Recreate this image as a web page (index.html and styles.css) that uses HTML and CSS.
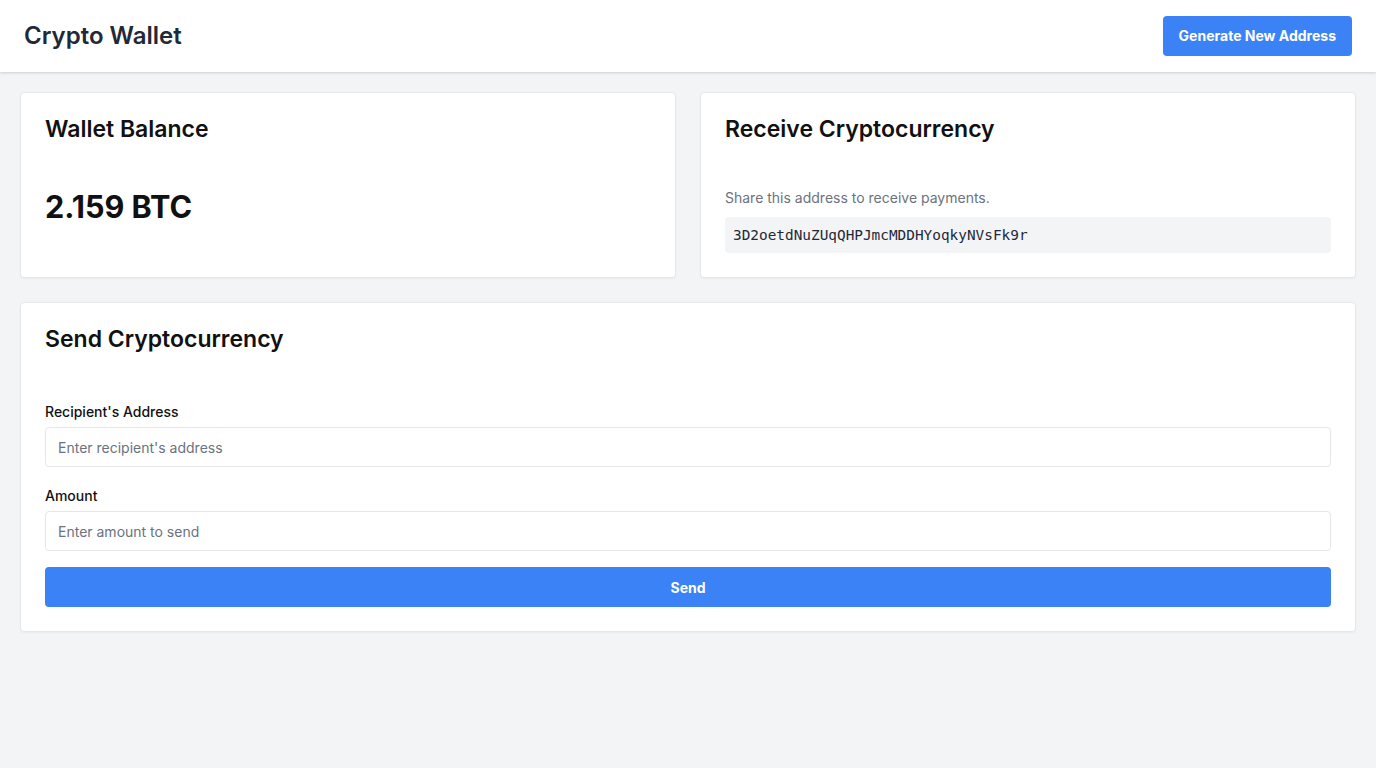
FILE: index.html
```html
<!DOCTYPE html>
<html lang="en">
<head>
<meta charset="utf-8">
<title>Crypto Wallet</title>
<link rel="stylesheet" href="styles.css">
</head>
<body>
<header class="topbar">
  <h1 class="brand">Crypto Wallet</h1>
  <button class="btn btn-header">Generate New Address</button>
</header>
<main class="main">
  <div class="row">
    <section class="card">
      <h2 class="card-title">Wallet Balance</h2>
      <p class="balance">2.159 BTC</p>
    </section>
    <section class="card">
      <h2 class="card-title">Receive Cryptocurrency</h2>
      <p class="muted">Share this address to receive payments.</p>
      <div class="address">3D2oetdNuZUqQHPJmcMDDHYoqkyNVsFk9r</div>
    </section>
  </div>
  <section class="card">
    <h2 class="card-title">Send Cryptocurrency</h2>
    <form class="send-form">
      <label class="field-label" for="addr">Recipient's Address</label>
      <input class="field" id="addr" type="text" placeholder="Enter recipient's address">
      <label class="field-label" for="amt">Amount</label>
      <input class="field field-last" id="amt" type="text" placeholder="Enter amount to send">
      <button type="button" class="btn btn-send">Send</button>
    </form>
  </section>
</main>
</body>
</html>
```
FILE: styles.css
```css
* { box-sizing: border-box; }
body {
  margin: 0;
  background: #f3f4f6;
  font-family: Inter, "Noto Sans", sans-serif;
  color: #111827;
}
.topbar {
  height: 72px;
  background: #fff;
  display: flex;
  align-items: center;
  justify-content: space-between;
  padding: 0 24px;
  box-shadow: 0 1px 3px rgba(0,0,0,0.1), 0 1px 2px rgba(0,0,0,0.06);
}
.brand {
  margin: 0;
  font-size: 24px;
  line-height: 32px;
  font-weight: 600;
  color: #1f2937;
}
.btn {
  font-family: Inter, "Noto Sans", sans-serif;
  background: #3b82f6;
  color: #fff;
  border: 0;
  border-radius: 4px;
  font-size: 14px;
  font-weight: 700;
  height: 40px;
  cursor: pointer;
}
.btn-header { padding: 0 16px 1px; }
.main {
  padding: 20px;
  display: flex;
  flex-direction: column;
  gap: 24px;
}
.row {
  display: grid;
  grid-template-columns: 1fr 1fr;
  gap: 24px;
}
.card {
  background: #fff;
  border: 1px solid #e5e7eb;
  border-radius: 4px;
  padding: 20px 24px 24px;
  box-shadow: 0 1px 2px rgba(0,0,0,0.04);
}
.card-title {
  margin: 0 0 43px;
  font-size: 23px;
  line-height: 32px;
  font-weight: 600;
  color: #111;
}
.balance {
  margin: 0;
  font-size: 30.6px;
  line-height: 38px;
  font-weight: 700;
  color: #111;
}
.muted {
  margin: 0 0 9px;
  font-size: 14px;
  line-height: 20px;
  color: #6b7280;
}
.address {
  background: #f3f4f6;
  border-radius: 4px;
  padding: 8px;
  font-family: "DejaVu Sans Mono", monospace;
  font-size: 14.4px;
  line-height: 20px;
  color: #1f2937;
}
.send-form {
  display: flex;
  flex-direction: column;
  padding-top: 4px;
}
.field-label {
  font-size: 14px;
  line-height: 20px;
  font-weight: 500;
  color: #111;
  margin-bottom: 5px;
}
.field {
  height: 40px;
  border: 1px solid #e5e7eb;
  border-radius: 4px;
  padding: 0 12px;
  font-family: Inter, "Noto Sans", sans-serif;
  font-size: 14px;
  margin: 0 0 19px;
  color: #111;
  background: #fff;
}
.field-last { margin-bottom: 16px; }
.field::placeholder { color: #6b7280; }
.btn-send {
  width: 100%;
}
```
